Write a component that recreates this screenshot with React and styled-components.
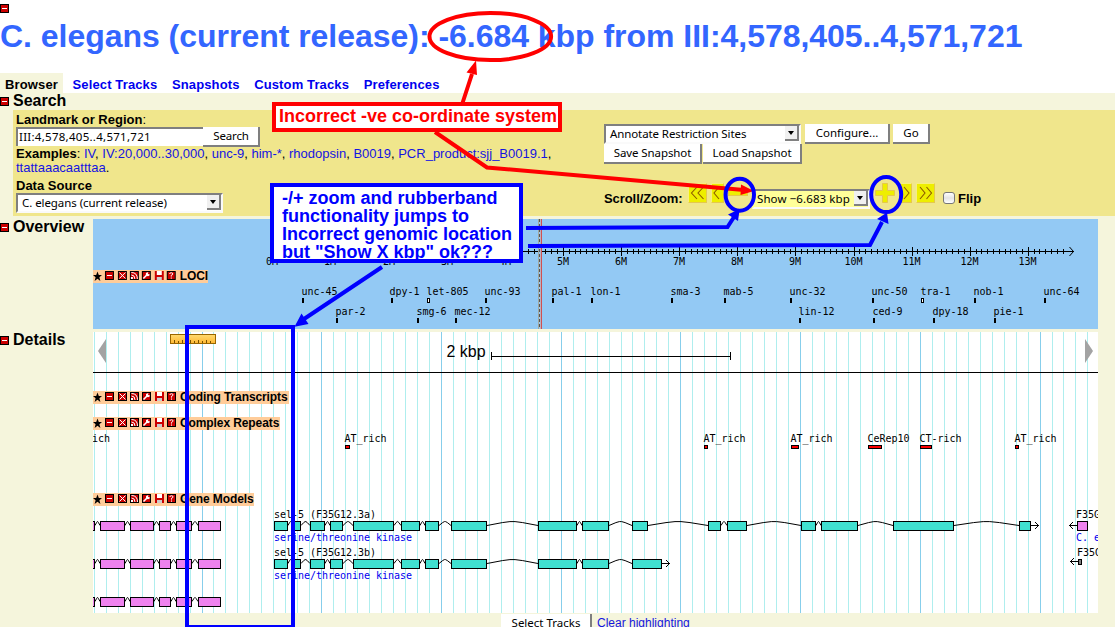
import React from "react";
import styled, { createGlobalStyle } from "styled-components";

const Global = createGlobalStyle`
  * { box-sizing: border-box; }
  html, body { margin: 0; padding: 0; overflow: hidden; }
  body { background: #f5f5dc; font-family: "Liberation Sans", Arial, sans-serif; font-size: 13px; color: #000; }
`;

const Page = styled.div`
  position: relative;
  width: 1115px;
  height: 627px;
  overflow: hidden;
  background: #f5f5dc;
`;
const Header = styled.header`
  height: 73px;
  background: #fff;
  padding-top: 4px;
`;
const Title = styled.h1`
  margin: 5px 0 0;
  font-size: 32px;
  line-height: 36px;
  font-weight: bold;
  letter-spacing: -0.03px;
  color: #3366ff;
  white-space: nowrap;
`;
const Tabs = styled.nav`
  display: flex;
  height: 20px;
  background: #fff;
`;
const Tab = styled.a`
  padding: 0 5px;
  margin-right: 4.6px;
  line-height: 24px;
  height: 20px;
  font-weight: bold;
  letter-spacing: 0.13px;
  white-space: nowrap;
  color: ${(p) => (p.$active ? "#000" : "#0000ee")};
  background: ${(p) => (p.$active ? "#f5f5dc" : "transparent")};
`;
const Section = styled.section`
  display: flex;
  margin-top: 3px;
`;
const SectionTitle = styled.h2`
  display: flex;
  align-items: center;
  gap: 4px;
  width: 93px;
  height: 17px;
  margin: 0;
  font-size: 16px;
  line-height: 15px;
  white-space: nowrap;
  svg { margin-top: ${(p) => p.$drop || 0}px; }
`;
const TitleText = styled.span`
  height: 17px;
`;
const SearchPanel = styled.div`
  display: flex;
  height: 106px;
  margin-left: 13px;
  padding-left: 3px;
  background: #f0e68c;
`;
const SearchColumn = styled.div`
  width: 588px;
`;
const ControlColumn = styled.div`
  flex: 1;
  padding-top: 14px;
`;
const Label = styled.div`
  height: ${(p) => p.$h}px;
  line-height: ${(p) => p.$line}px;
  white-space: nowrap;
`;
const Row = styled.div`
  display: flex;
  align-items: flex-start;
  height: 20px;
`;
const uiFont = `"Noto Sans", "Open Sans", sans-serif`;
const TextField = styled.div`
  width: 187px;
  height: 19px;
  border-top: 2px solid #7f7f7f;
  border-left: 2px solid #7f7f7f;
  background: #fff;
  font: 11.5px/16px ${uiFont};
  letter-spacing: 0.27px;
  padding-left: 1px;
  white-space: nowrap;
`;
const Button = styled.button`
  width: ${(p) => p.$w}px;
  height: 20px;
  margin: 0 ${(p) => p.$gap || 0}px 0 0;
  padding: 0 0 0 1px;
  border: 0 solid #7f7f7f;
  border-right-width: 2px;
  border-bottom-width: 2px;
  background: #fff;
  color: #000;
  font: 11.5px/18px ${uiFont};
  letter-spacing: ${(p) => p.$ls || 0}px;
  white-space: nowrap;
`;
const SelectBox = styled.div`
  display: flex;
  justify-content: space-between;
  width: ${(p) => p.$w}px;
  height: 20px;
  margin-right: ${(p) => p.$gap || 0}px;
  border: 2px solid #fafafa;
  border-top-color: #7f7f7f;
  border-left-color: ${(p) => (p.$fill ? "#ffff99" : "#7f7f7f")};
  background: ${(p) => p.$fill || "#fff"};
  padding-left: ${(p) => (p.$fill ? 3 : 4)}px;
  font: 11.5px/16px ${uiFont};
  letter-spacing: ${(p) => p.$ls || 0}px;
  white-space: nowrap;
`;
const SelectArrow = styled.span`
  display: flex;
  align-items: center;
  justify-content: center;
  width: 14px;
  height: 15px;
  background: #f0f0f0;
  border-right: 2px solid #808080;
  border-bottom: 2px solid #808080;
  &::after {
    content: "";
    border: 3.5px solid transparent;
    border-top: 4px solid #000;
    border-bottom: 0;
  }
`;
const Link = styled.a`
  color: #1414e0;
  font-size: ${(p) => p.$size || 13}px;
`;
const NavRow = styled.div`
  display: flex;
  align-items: flex-start;
  margin-top: 19px;
`;
const NavLabel = styled.b`
  width: 84px;
  line-height: 15px;
  margin-top: 8px;
  letter-spacing: -0.07px;
`;
const NavButton = styled.div`
  width: ${(p) => p.$w}px;
  height: 20px;
  margin-right: ${(p) => p.$gap ?? 4}px;
  background: ${(p) => (p.$bare ? "transparent" : "#eeee00")};
  border: ${(p) => (p.$bare ? "0" : "1px solid #e5c84c")};
  border-top-color: #f7ef80;
  border-left-color: #f7ef80;
  svg { display: block; margin: ${(p) => (p.$bare ? 0 : -1)}px; }
`;
const NavSelect = styled.div`
  margin-top: 6px;
  margin-right: 5px;
`;
const Check = styled.span`
  width: 12px;
  height: 12px;
  margin: 9px 3px 0 8px;
  border: 1px solid #777;
  border-radius: 3px;
  background: linear-gradient(#fff, #e4e4e4 50%, #fff);
`;
const FlipLabel = styled.b`
  margin-top: 8px;
  line-height: 15px;
`;
const Panel = styled.div`
  position: relative;
  width: 1005px;
  height: ${(p) => p.$h}px;
  background: ${(p) => p.$bg};
  svg { display: block; }
`;
const TrackBar = styled.div`
  position: absolute;
  left: 0;
  top: ${(p) => p.$y}px;
  display: flex;
  align-items: center;
  height: 13px;
  width: ${(p) => p.$w}px;
  background: #ffcc99;
  font-size: 12px;
  font-weight: bold;
  line-height: 13px;
  letter-spacing: -0.1px;
  white-space: nowrap;
`;
const Footer = styled.footer`
  display: flex;
  padding: 1px 0 0 501px;
  gap: 5px;
`;
const FooterLink = styled(Link)`
  line-height: 18px;
`;
const Overlay = styled.svg`
  position: absolute;
  left: 0;
  top: 0;
`;
const Note = styled.div`
  position: absolute;
  left: ${(p) => p.$x}px;
  top: ${(p) => p.$y}px;
  width: ${(p) => p.$w}px;
  height: ${(p) => p.$h}px;
  border: 4px solid ${(p) => p.$color};
  background: #fff;
  color: ${(p) => p.$color};
  font-size: 18px;
  line-height: 18px;
  font-weight: bold;
  white-space: nowrap;
  padding: ${(p) => p.$pad};
`;

const Collapse = () => (
  <svg width="9" height="9" viewBox="0 0 9 9" style={{ display: "block", flex: "none" }}>
    <rect width="9" height="9" fill="#000" />
    <rect x="1" y="1" width="7" height="7" fill="#cc0000" />
    <rect x="2" y="4" width="5" height="1" fill="#fff" />
  </svg>
);

const TrackIcons = () => (
  <svg width="87" height="13" viewBox="0 0 87 13">
    <path d="M4.5 1.5L5.8 5H9L6.4 7.3L7.4 11L4.5 8.8L1.6 11L2.6 7.3L0 5H3.2Z" fill="#000" />
    {[12, 25, 37, 49, 74].map((x) => (
      <g key={x}>
        <rect x={x} y="1" width="9" height="9" fill="#000" />
        <rect x={x + 1} y="2" width="7" height="7" fill="#cc0000" />
      </g>
    ))}
    <rect x="14" y="5" width="5" height="1" fill="#fff" />
    <path d="M26.5 2.5L32.5 8.5M32.5 2.5L26.5 8.5" stroke="#fff" />
    <path d="M38.5 2.5Q44.5 2.5 44.5 9M38.5 5Q42 5 42 9" fill="none" stroke="#fff" />
    <rect x="38" y="7" width="2" height="2" fill="#fff" />
    <path d="M50.5 8.5L54 5" stroke="#fff" strokeWidth="1.6" />
    <path d="M53 3.2Q54 2 55.5 2.2L55 4L56.8 4.2Q57 6 55 6.2L53 5.6Z" fill="#fff" />
    <path d="M62 1h9v9h-9z" fill="#cc0000" />
    <rect x="64" y="1" width="5" height="4" fill="#fff" />
    <rect x="64" y="7" width="5" height="3" fill="#ccc" />
    <path d="M76.8 4Q77 2.7 78.5 2.7Q80.1 2.8 80 4Q79.8 5 78.5 5.3V6.6M78.5 7.5V8.7" fill="none" stroke="#fff" />
  </svg>
);

const Track = ({ y, w, name }) => (
  <TrackBar $y={y} $w={w}>
    <TrackIcons />
    {name}
  </TrackBar>
);

const ChartText = ({ x, y, children, fill = "#000" }) => (
  <text
    x={x}
    y={y}
    fill={fill}
    fontFamily='"DejaVu Sans Mono", monospace'
    fontSize="10"
    textLength={children.length * 6}
    lengthAdjust="spacing"
  >
    {children}
  </text>
);

const loci = [
  ["unc-45", 302, 0], ["dpy-1", 390, 0], ["let-805", 427, 0, true], ["unc-93", 485, 0],
  ["pal-1", 552, 0], ["lon-1", 591, 0], ["sma-3", 671, 0], ["mab-5", 724, 0],
  ["unc-32", 790, 0], ["unc-50", 872, 0], ["tra-1", 921, 0, true], ["nob-1", 974, 0],
  ["unc-64", 1044, 0], ["par-2", 336, 1], ["smg-6", 417, 1], ["mec-12", 455, 1],
  ["lin-12", 799, 1], ["ced-9", 873, 1], ["dpy-18", 933, 1], ["pie-1", 994, 1],
];

const OverviewChart = () => {
  const ticks = Array.from({ length: 137 }, (_, i) => i);
  const px = (i) => Math.floor(272.8 + i * 5.812);
  return (
    <svg width="1005" height="110" viewBox="93 219 1005 110">
      <g shapeRendering="crispEdges">
        <rect x="273" y="251" width="801" height="1" />
        {ticks.map((i) => (
          <rect key={i} x={px(i)} y={i % 10 ? 249 : 247} width="1" height={i % 10 ? 5 : 9} />
        ))}
        <path d="M538.5 219V329" stroke="#a0a8a0" />
        <path d="M539.5 219V329" stroke="#555" strokeDasharray="3 2" />
        <path d="M541.5 219V329" stroke="#d05050" />
        <path d="M540.5 219V329" stroke="#b8b0c0" />
      </g>
      <path d="M1069.5 247L1073.5 251.5L1069.5 256" fill="none" stroke="#000" />
      {Array.from({ length: 14 }, (_, m) => (
        <ChartText key={m} x={px(m * 10) - (m > 9 ? 9.5 : 6)} y={265}>{`${m}M`}</ChartText>
      ))}
      {loci.map(([name, x, row, hollow]) => (
        <g key={name}>
          <ChartText x={x - 0.5} y={295 + row * 20}>{name}</ChartText>
          {hollow ? (
            <rect x={x + 0.5} y={298.5} width="2" height="4" fill="#fff" stroke="#000" />
          ) : (
            <rect x={x + (name === "dpy-1" ? 1 : 0)} y={298 + row * 20} width="2" height="5" />
          )}
        </g>
      ))}
    </svg>
  );
};

const pinkExons = [[90, 95], [100, 125], [130, 154], [159, 171], [176, 192], [198, 221]];
const headExons = [
  [274, 288], [293, 301], [310, 325], [330, 343], [353, 394], [401, 420],
  [425, 439], [451, 487], [538, 577], [582, 609],
];
const formA = [
  ...headExons, [632, 648], [708, 721], [727, 747], [801, 816], [821, 858], [893, 954], [1019, 1031],
];
const formB = [...headExons, [632, 662]];

const Gene = ({ exons, y, fill, arrow }) => (
  <g stroke="#000" fill="none">
    {exons.slice(1).map(([s], i) => {
      const e = exons[i][1];
      const m = (s + e) / 2;
      const w = s - e;
      return (
        <path
          key={s}
          d={`M${e} ${y + 4.5}L${m - w * 0.2} ${y + 1.6}L${m - w * 0.05} ${y + 0.6}H${m + w * 0.05}L${m + w * 0.2} ${y + 1.6}L${s} ${y + 4.5}`}
        />
      );
    })}
    {exons.map(([a, b]) => (
      <rect key={a} x={a + 0.5} y={y + 0.5} width={b - a - 1} height="9" fill={fill} />
    ))}
    {arrow && <path d={`M${arrow - 8} ${y + 4.5}H${arrow}M${arrow - 4} ${y + 1}L${arrow - 0.5} ${y + 4.5}L${arrow - 4} ${y + 8}`} />}
  </g>
);

const repeats = [
  ["AT_rich", 345, 5], ["AT_rich", 704, 4], ["AT_rich", 791, 8],
  ["CeRep10", 868, 14], ["CT-rich", 920, 12], ["AT_rich", 1015, 4],
];

const DetailsChart = () => (
  <svg width="1005" height="281" viewBox="93 332 1005 281">
    <defs>
      <linearGradient id="gold" x1="0" y1="0" x2="0" y2="1">
        <stop offset="0" stopColor="#ffdb70" />
        <stop offset="1" stopColor="#ffb733" />
      </linearGradient>
    </defs>
    <g shapeRendering="crispEdges">
      {Array.from({ length: 84 }, (_, i) => i - 9).map((k) => (
        <rect key={k} x={Math.floor(202 + k * 11.972)} y="332" width="1" height="281" fill={k % 10 ? "#afeeee" : "#87ceeb"} />
      ))}
      <rect x="93" y="372" width="1005" height="1" />
      <rect x="491" y="356" width="240" height="1" />
      <rect x="491" y="352" width="1" height="8" />
      <rect x="730" y="352" width="1" height="8" />
    </g>
    <path d="M98 351L106 339V363Z" fill="#a3a3a3" />
    <path d="M1093 351L1085 339V363Z" fill="#a3a3a3" />
    <rect x="170.5" y="334.5" width="45" height="9" fill="url(#gold)" stroke="#996600" />
    <path d="M174.5 340v3M178.5 341v2M182.5 340v3M186.5 341v2M190.5 340v3M194.5 341v2M198.5 340v3M202.5 341v2M206.5 340v3M210.5 341v2" stroke="#7a5200" />
    <text x="446.5" y="357" fontFamily='"Liberation Sans", sans-serif' fontSize="16" textLength="39" lengthAdjust="spacingAndGlyphs">2 kbp</text>
    <ChartText x={92} y={442}>ich</ChartText>
    {repeats.map(([name, x, w]) => (
      <g key={x}>
        <ChartText x={x - 0.5} y={442}>{name}</ChartText>
        <rect x={x + 0.5} y="445.5" width={w - 1} height="3" fill="#f00" stroke="#000" />
      </g>
    ))}
    {[521, 559, 597].map((y) => <Gene key={y} exons={pinkExons} y={y} fill="#ee82ee" />)}
    <Gene exons={formA} y={521} fill="#40e0d0" arrow={1039} />
    <Gene exons={formB} y={559} fill="#40e0d0" arrow={670} />
    <ChartText x={274} y={518}>sel-5 (F35G12.3a)</ChartText>
    <ChartText x={274} y={541} fill="#0000ee">serine/threonine kinase</ChartText>
    <ChartText x={274} y={556}>sel-5 (F35G12.3b)</ChartText>
    <ChartText x={274} y={579} fill="#0000ee">serine/threonine kinase</ChartText>
    <ChartText x={1076} y={518}>F35G</ChartText>
    <ChartText x={1076} y={541} fill="#0000ee">C. e</ChartText>
    <ChartText x={1077} y={556}>F35G</ChartText>
    <g stroke="#000" fill="none">
      <rect x="1077.5" y="521.5" width="10" height="9" fill="#ee82ee" />
      <path d="M1077 525.5H1069M1073 522L1069.5 525.5L1073 529" />
      <rect x="1078.5" y="559.5" width="3" height="5" fill="#808080" />
      <path d="M1078 561.5H1070M1074 558L1070.5 561.5L1074 565" />
    </g>
  </svg>
);

const Chevrons = ({ w, d }) => (
  <svg width={w} height="20" viewBox={`0 0 ${w} 20`}>
    <path d={d} fill="none" stroke="#8b5a00" strokeWidth="1.1" />
  </svg>
);

const sample = ["IV", "IV:20,000..30,000", "unc-9", "him-*", "rhodopsin", "B0019", "PCR_product:sjj_B0019.1"];

export default function App() {
  return (
    <Page>
      <Global />
      <Header>
        <Collapse />
        <Title>C. elegans (current release): -6.684 kbp from III:4,578,405..4,571,721</Title>
      </Header>
      <Tabs>
        <Tab $active>Browser</Tab>
        <Tab>Select Tracks</Tab>
        <Tab>Snapshots</Tab>
        <Tab>Custom Tracks</Tab>
        <Tab>Preferences</Tab>
      </Tabs>
      <SectionTitle><Collapse /><TitleText>Search</TitleText></SectionTitle>
      <SearchPanel>
        <SearchColumn>
          <Label $h={17} $line={19}><b>Landmark or Region</b>:</Label>
          <Row>
            <TextField>III:4,578,405..4,571,721</TextField>
            <Button $w={57} $ls={-0.15}>Search</Button>
          </Row>
          <Label $h={14} $line={14}>
            <b>Examples</b>:{" "}
            {sample.map((s) => <React.Fragment key={s}><Link>{s}</Link>, </React.Fragment>)}
          </Label>
          <Label $h={15} $line={14}><Link>ttattaaacaatttaa</Link>.</Label>
          <Label $h={17} $line={19}><b>Data Source</b></Label>
          <SelectBox $w={207} $ls={-0.07}>C. elegans (current release)<SelectArrow /></SelectBox>
        </SearchColumn>
        <ControlColumn>
          <Row>
            <SelectBox $w={197} $gap={4} $ls={-0.1}>Annotate Restriction Sites<SelectArrow /></SelectBox>
            <Button $w={85} $gap={3}>Configure...</Button>
            <Button $w={37}>Go</Button>
          </Row>
          <Row>
            <Button $w={98} $gap={1} $ls={-0.1}>Save Snapshot</Button>
            <Button $w={99} $ls={-0.1}>Load Snapshot</Button>
          </Row>
          <NavRow>
            <NavLabel>Scroll/Zoom:</NavLabel>
            <NavButton $w={19}><Chevrons w={19} d="M9 4L3.5 10L9 16M15.5 4L10 10L15.5 16" /></NavButton>
            <NavButton $w={13}><Chevrons w={13} d="M8 4L3 10L8 16" /></NavButton>
            <NavButton $w={22} $gap={2} $bare>
              <svg width="22" height="20"><rect x="0.5" y="7.5" width="19" height="5" fill="#eeee00" stroke="#e5c84c" /></svg>
            </NavButton>
            <NavSelect>
              <SelectBox $w={118} $fill="#ffff99" $ls={0.1}>Show −6.683 kbp<SelectArrow /></SelectBox>
            </NavSelect>
            <NavButton $w={21} $bare>
              <svg width="21" height="20"><path d="M7.5 .5H12.500V7.500H19.500V12.500H12.500V19.500H7.500V12.500H.5V7.500H7.500Z" fill="#eeee00" stroke="#e5c84c" /></svg>
            </NavButton>
            <NavButton $w={12}><Chevrons w={12} d="M4 4L9 10L4 16" /></NavButton>
            <NavButton $w={19} $gap={0}><Chevrons w={19} d="M4 4L9 10L4 16M10.500 4L15.500 10L10.500 16" /></NavButton>
            <Check />
            <FlipLabel>Flip</FlipLabel>
          </NavRow>
        </ControlColumn>
      </SearchPanel>
      <Section>
        <SectionTitle><Collapse /><TitleText>Overview</TitleText></SectionTitle>
        <Panel $h={110} $bg="#93c9f4">
          <OverviewChart />
          <Track y={51} w={115} name="LOCI" />
        </Panel>
      </Section>
      <Section>
        <SectionTitle><Collapse /><TitleText>Details</TitleText></SectionTitle>
        <Panel $h={281} $bg="#fff">
          <DetailsChart />
          <Track y={59} w={196} name="Coding Transcripts" />
          <Track y={85} w={187} name="Complex Repeats" />
          <Track y={161} w={161} name="Gene Models" />
        </Panel>
      </Section>
      <Footer>
        <Button $w={91}>Select Tracks</Button>
        <FooterLink $size={12}>Clear highlighting</FooterLink>
      </Footer>
      <Note $x={272} $y={102} $w={290} $h={30} $color="#ff0000" $pad="1px 0 0 3px">Incorrect -ve co-ordinate system</Note>
      <Note $x={270} $y={183} $w={253} $h={80} $color="#0000ff" $pad="2px 0 0 8px">
        -/+ zoom and rubberband<br />functionality jumps to<br />Incorrect genomic location<br />but "Show X kbp" ok???
      </Note>
      <Overlay width="1115" height="627" viewBox="0 0 1115 627" fill="none" strokeWidth="4">
        <g stroke="#f00">
          <ellipse cx="490.300" cy="36.500" rx="60.800" ry="23.600" />
          <path d="M462.500 103L472 74M435 132L487 167.500L744 190" />
        </g>
        <path d="M476 60.500L466.500 72.500L477 75ZM754 191L741 184.500L740.500 195Z" fill="#f00" />
        <g stroke="#00f">
          <ellipse cx="739.800" cy="194.700" rx="14.200" ry="16" />
          <ellipse cx="886.200" cy="194.500" rx="15" ry="17.600" />
          <path d="M526 228L727.500 227L734 217M528 246L870 245L882 222M382 267L304 319" />
          <rect x="187" y="327" width="106" height="300" />
        </g>
        <path d="M739.700 209L728 214.500L738 221ZM887 212.500L877 219L888.500 224ZM294.500 326.700L301.500 313.500L308.500 324Z" fill="#00f" />
      </Overlay>
    </Page>
  );
}
